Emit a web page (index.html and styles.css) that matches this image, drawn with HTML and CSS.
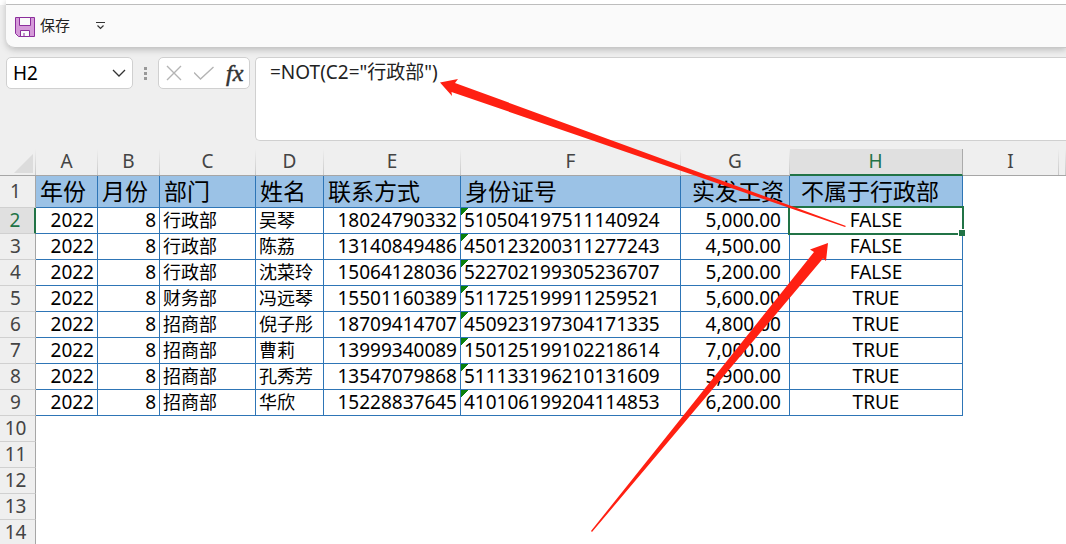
FILE: index.html
```html
<!DOCTYPE html>
<html lang="zh-CN">
<head>
<meta charset="utf-8">
<title>工资表</title>
<link rel="stylesheet" href="styles.css">
</head>
<body>
<div class="app">
  <header class="quick-bar">
    <div class="quick-tools">
      <button class="save" type="button">
        <svg width="20" height="20" viewBox="0 0 20 20" aria-hidden="true">
          <path d="M.5.5h19v19H3.500l-3-3z" fill="#d59ad9" stroke="#8c2f9c"/>
          <path d="M4.500.500h11v8h-11z" fill="#fafafa" stroke="#8c2f9c"/>
          <path d="M5.500 19.500v-6h9v6z" fill="#fafafa" stroke="#8c2f9c"/>
          <path d="M9 16v3.500" stroke="#8c2f9c"/>
        </svg>
        <span>保存</span>
      </button>
      <button class="customize" type="button" aria-label="自定义快速访问工具栏">
        <svg width="10" height="9" viewBox="0 0 10 9" fill="none" stroke="#333" aria-hidden="true"><path d="M0 1.500h9M1.500 4.500L4.500 7.500L7.500 4.500" stroke-width="1.200"/></svg>
      </button>
    </div>
  </header>

  <section class="formula-row">
    <div class="name-box">
      <input type="text" value="H2" aria-label="名称框">
      <button type="button" aria-label="展开名称列表">
        <svg width="14" height="8" viewBox="0 0 14 8" fill="none" stroke="#333" stroke-width="1.300" aria-hidden="true"><path d="M1 1l6 6l6-6"/></svg>
      </button>
    </div>
    <svg class="grip" width="3" height="13" viewBox="0 0 3 13" fill="#999" aria-hidden="true"><path d="M0 0h3v3H0zM0 5h3v3H0zM0 10h3v3H0z"/></svg>
    <div class="formula-actions">
      <button type="button" aria-label="取消"><svg width="16" height="16" viewBox="0 0 16 16" fill="none" stroke="#b4b4b4" stroke-width="1.400"><path d="M1 1l14 14M15 1L1 15"/></svg></button>
      <button type="button" aria-label="输入"><svg width="20" height="14" viewBox="0 0 20 14" fill="none" stroke="#b4b4b4" stroke-width="1.400"><path d="M0 6.500l6.500 6.500L19.500 1"/></svg></button>
      <button class="fx" type="button" aria-label="插入函数">fx</button>
    </div>
    <textarea class="formula" aria-label="编辑栏" spellcheck="false">=NOT(C2="行政部")</textarea>
  </section>

  <main>
    <table class="sheet">
      <colgroup>
        <col class="w-index"><col class="w-a"><col class="w-a"><col class="w-c"><col class="w-d"><col class="w-e"><col class="w-f"><col class="w-g"><col class="w-h"><col class="w-c"><col>
      </colgroup>
      <thead>
        <tr><th class="corner"><svg width="19" height="19" viewBox="0 0 19 19" fill="#dcdcdc" aria-hidden="true"><path d="M19 0v19H0z"/></svg></th><th>A</th><th>B</th><th>C</th><th>D</th><th>E</th><th>F</th><th>G</th><th class="active">H</th><th>I</th><th></th></tr>
      </thead>
      <tbody>
        <tr class="titles"><th>1</th><td>年份</td><td>月份</td><td>部门</td><td>姓名</td><td>联系方式</td><td>身份证号</td><td class="pay">实发工资</td><td class="result">不属于行政部</td></tr>
        <tr class="data"><th class="active">2</th><td class="num">2022</td><td class="num">8</td><td>行政部</td><td>吴琴</td><td class="num">18024790332</td><td class="id">510504197511140924</td><td class="pay">5,000.00</td><td class="result selected">FALSE</td></tr>
        <tr class="data"><th>3</th><td class="num">2022</td><td class="num">8</td><td>行政部</td><td>陈荔</td><td class="num">13140849486</td><td class="id">450123200311277243</td><td class="pay">4,500.00</td><td class="result">FALSE</td></tr>
        <tr class="data"><th>4</th><td class="num">2022</td><td class="num">8</td><td>行政部</td><td>沈菜玲</td><td class="num">15064128036</td><td class="id">522702199305236707</td><td class="pay">5,200.00</td><td class="result">FALSE</td></tr>
        <tr class="data"><th>5</th><td class="num">2022</td><td class="num">8</td><td>财务部</td><td>冯远琴</td><td class="num">15501160389</td><td class="id">511725199911259521</td><td class="pay">5,600.00</td><td class="result">TRUE</td></tr>
        <tr class="data"><th>6</th><td class="num">2022</td><td class="num">8</td><td>招商部</td><td>倪子彤</td><td class="num">18709414707</td><td class="id">450923197304171335</td><td class="pay">4,800.00</td><td class="result">TRUE</td></tr>
        <tr class="data"><th>7</th><td class="num">2022</td><td class="num">8</td><td>招商部</td><td>曹莉</td><td class="num">13999340089</td><td class="id">150125199102218614</td><td class="pay">7,000.00</td><td class="result">TRUE</td></tr>
        <tr class="data"><th>8</th><td class="num">2022</td><td class="num">8</td><td>招商部</td><td>孔秀芳</td><td class="num">13547079868</td><td class="id">511133196210131609</td><td class="pay">5,900.00</td><td class="result">TRUE</td></tr>
        <tr class="data"><th>9</th><td class="num">2022</td><td class="num">8</td><td>招商部</td><td>华欣</td><td class="num">15228837645</td><td class="id">410106199204114853</td><td class="pay">6,200.00</td><td class="result">TRUE</td></tr>
        <tr><th>10</th></tr>
        <tr><th>11</th></tr>
        <tr><th>12</th></tr>
        <tr><th>13</th></tr>
        <tr><th>14</th></tr>
      </tbody>
    </table>
  </main>

  <svg class="arrows" width="1066" height="544" viewBox="0 0 1066 544" fill="#ff2012" aria-hidden="true">
    <path d="M440 82.500L458 79L455 83L846 226L845 227L451.500 92L452 96z"/>
    <path d="M828 243L810 249.500L814 252L591 531L592 532L823 258.500L826 261z"/>
  </svg>
</div>
</body>
</html>
```
FILE: styles.css
```css
* { box-sizing: border-box; }

body {
  margin: 0;
  background: #fff;
  color: #000;
  font-family: "Noto Sans", "Noto Sans CJK SC", sans-serif;
}

button, input, textarea {
  margin: 0;
  padding: 0;
  border: 0;
  background: none;
  color: inherit;
  font: inherit;
}

button svg { display: block; }

.app {
  position: relative;
  height: 100vh;
  overflow: hidden;
}

.quick-bar {
  padding: 0 0 9px 6px;
  background: linear-gradient(#fff 5px, #efefef 5px);
}

.quick-tools {
  display: flex;
  align-items: center;
  gap: 26px;
  height: 48px;
  padding: 4px 0 0 9px;
  border-bottom: 1px solid #c8c8c8;
  border-bottom-left-radius: 9px;
  background: linear-gradient(#fff 4px, #bdbdbd 4px, #bdbdbd 5px, #fafafa 5px);
  box-shadow: 0 2px 6px #bdbdbd;
}

.save {
  display: flex;
  align-items: center;
  gap: 5px;
  color: #222;
  font-size: 15px;
  line-height: 20px;
}

.save span { padding-bottom: 2px; }

.save svg { margin-top: 2px; }

.formula-row {
  display: flex;
  align-items: flex-start;
  height: 92px;
  padding-left: 6px;
  background: #efefef;
}

.name-box, .formula-actions {
  display: flex;
  align-items: center;
  height: 32px;
  border: 1px solid #d0d0d0;
  border-radius: 5px;
  background: #fff;
}

.name-box {
  width: 127px;
  padding: 0 6px;
}

.name-box input {
  flex: 1;
  min-width: 0;
  font-size: 19px;
}

.grip { margin: 10px 11px 0; }

.formula-actions {
  gap: 12px;
  width: 92px;
  padding-left: 7px;
}

.fx {
  color: #333;
  font: italic 24px/28px "Liberation Serif", serif;
  -webkit-text-stroke: 0.5px #333;
}

.formula {
  flex: 1;
  height: 84px;
  margin-left: 5px;
  padding: 1px 14px;
  border: 1px solid #d0d0d0;
  border-right: 0;
  border-radius: 5px 0 0 5px;
  background: #fff;
  color: #222;
  font-size: 19px;
  line-height: 26px;
  resize: none;
}

.sheet {
  width: 100%;
  table-layout: fixed;
  border-collapse: separate;
  border-spacing: 0;
  line-height: 25px;
}

.w-index { width: 36px; }
.w-a { width: 62px; }
.w-c { width: 96px; }
.w-d { width: 68px; }
.w-e { width: 137px; }
.w-f { width: 220px; }
.w-g { width: 109px; }
.w-h { width: 173px; }

.sheet th {
  padding: 0;
  color: #444;
  background: #efefef;
  font-size: 19px;
  font-weight: 400;
}

.sheet thead th {
  height: 27px;
  padding: 0 1px 2px 0;
  border-bottom: 1px solid #a6a6a6;
  background: linear-gradient(#efefef, #c8c8c8) right / 1px 100% no-repeat #efefef;
  line-height: 24px;
}

.sheet thead .corner { padding: 3px 3px 0 0; }

.sheet thead .corner svg {
  display: block;
  margin-left: auto;
}

.sheet thead .active {
  padding-bottom: 1px;
  border-right: 1px solid #ababab;
  border-bottom: 2px solid #217346;
  background: #e0e0e0;
  color: #217346;
}

.sheet tbody th {
  height: 26px;
  padding-right: 4px;
  border-right: 1px solid #a6a6a6;
  border-bottom: 1px solid #d0d0d0;
}

.sheet tbody .active {
  border-right: 2px solid #217346;
  background: #e0e0e0;
  color: #217346;
}

.sheet td {
  padding: 0 3px;
  border-right: 1px solid #2e75b6;
  border-bottom: 1px solid #2e75b6;
  white-space: nowrap;
}

.titles td {
  height: 32px;
  padding: 0 4px;
  background: #9bc2e6;
  font-size: 23px;
  line-height: 31px;
}

.data td { font-size: 18px; }

.data .num, .data .id, .data .pay, .data .result { font-size: 19px; }

.sheet .num { text-align: right; }

.sheet .id { background: linear-gradient(135deg, #0b800b 5px, transparent 5px); }

.sheet .pay {
  padding-right: 8px;
  text-align: right;
}

.titles .pay { padding-right: 5px; }

.sheet .result { text-align: center; }

.titles .result { padding-right: 16px; }

.selected { position: relative; }

.selected::before {
  position: absolute;
  inset: -2px;
  border: 2px solid #217346;
  content: "";
}

.selected::after {
  position: absolute;
  right: -3px;
  bottom: -3px;
  width: 6px;
  height: 6px;
  border: solid #fff;
  border-width: 1px 0 0 1px;
  background: #217346;
  content: "";
}

.arrows {
  position: absolute;
  top: 0;
  left: 0;
  pointer-events: none;
}
```
